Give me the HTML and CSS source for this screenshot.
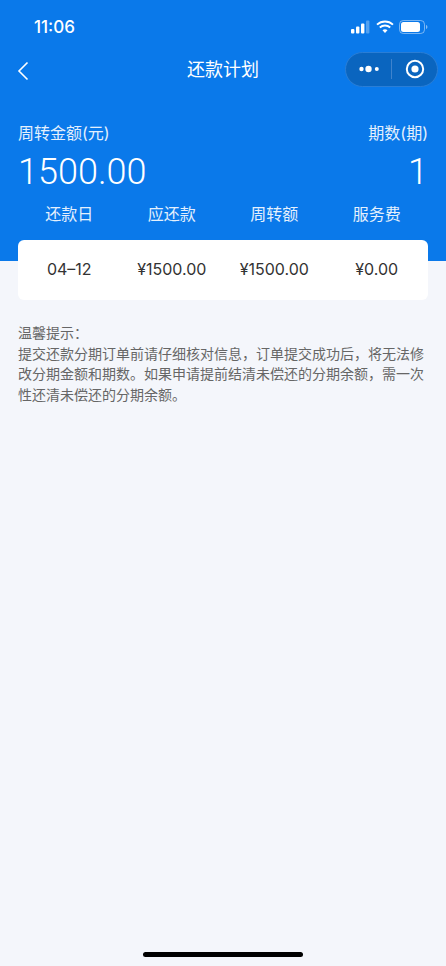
FILE: index.html
```html
<!DOCTYPE html>
<html lang="zh-CN">
<head>
<meta charset="utf-8">
<title>还款计划</title>
<link rel="stylesheet" href="styles.css">
</head>
<body>
<div class="page">
  <header class="hero">
    <div class="status">
      <span class="time">11:06</span>
      <div class="status-icons">
        <svg class="signal" width="20" height="14" viewBox="0 0 20 14"><rect x="0" y="9" width="3.4" height="4.4" rx="1" fill="#fff"/><rect x="5" y="6.5" width="3.4" height="6.9" rx="1" fill="#fff"/><rect x="10" y="3.5" width="3.4" height="9.9" rx="1" fill="#fff"/><rect x="15" y="0.6" width="3.4" height="12.8" rx="1" fill="#fff" opacity=".3"/></svg>
        <svg class="wifi" width="18" height="14" viewBox="0 0 18 14"><path d="M1 4.6C5.6.4 12.4.4 17 4.6" fill="none" stroke="#fff" stroke-width="1.9"/><path d="M3.8 7.5c3-2.7 7.4-2.7 10.4 0" fill="none" stroke="#fff" stroke-width="1.9"/><path d="M6.5 10.2c1.5-1.3 3.5-1.3 5 0L9 13z" fill="#fff"/></svg>
        <svg class="battery" width="29" height="14" viewBox="0 0 29 14"><rect x=".5" y=".5" width="25" height="13" rx="3.8" fill="none" stroke="#fff" stroke-opacity=".45"/><rect x="2" y="2" width="19" height="10" rx="2.5" fill="#fff"/><path d="M27 5v4c.9-.3 1.4-1.1 1.4-2S27.900 5.300 27 5z" fill="#fff" opacity=".5"/></svg>
      </div>
    </div>
    <nav class="nav">
      <svg class="back" width="12" height="20" viewBox="0 0 12 20"><path d="M10.500 1.500 2 10l8.500 8.500" fill="none" stroke="#fff" stroke-width="1.600"/></svg>
      <h1 class="title">还款计划</h1>
      <div class="capsule">
        <div class="cap-cell">
          <svg width="20" height="8" viewBox="0 0 20 8"><circle cx="2.500" cy="4" r="2.200" fill="#fff"/><circle cx="9.500" cy="4" r="3.200" fill="#fff"/><circle cx="17.800" cy="4" r="2" fill="#fff"/></svg>
        </div>
        <span class="cap-line"></span>
        <div class="cap-cell">
          <svg width="20" height="20" viewBox="0 0 20 20"><circle cx="10" cy="10" r="8.200" fill="none" stroke="#fff" stroke-width="2"/><circle cx="10" cy="10" r="3.600" fill="#fff"/></svg>
        </div>
      </div>
    </nav>
    <div class="summary">
      <div class="sum-col">
        <div class="sum-label">周转金额(元)</div>
        <div class="sum-value">1500.00</div>
      </div>
      <div class="sum-col sum-right">
        <div class="sum-label">期数(期)</div>
        <div class="sum-value">1</div>
      </div>
    </div>
    <div class="cols cols-head">
      <span>还款日</span><span>应还款</span><span>周转额</span><span>服务费</span>
    </div>
  </header>
  <main class="main">
    <div class="cols card">
      <span>04–12</span><span>¥1500.00</span><span>¥1500.00</span><span>¥0.00</span>
    </div>
    <section class="note">
      <p>温馨提示：</p>
      <p>提交还款分期订单前请仔细核对信息，订单提交成功后，将无法修改分期金额和期数。如果申请提前结清未偿还的分期余额，需一次性还清未偿还的分期余额。</p>
    </section>
  </main>
  <div class="home-bar"></div>
</div>
</body>
</html>
```

FILE: styles.css
```css
* { box-sizing: border-box; margin: 0; padding: 0; }
html, body { height: 100%; }
body {
  background: #f4f6fb;
  font-family: Inter, "Noto Sans CJK SC", sans-serif;
  overflow: hidden;
}
.page {
  position: relative;
  display: flex;
  flex-direction: column;
  height: 966px;
}
.hero {
  height: 261px;
  background: #0a79ea;
  color: #fff;
}
.status {
  display: flex;
  justify-content: space-between;
  align-items: center;
  height: 44px;
  padding: 10px 18px 0 34px;
}
.time {
  font-size: 17px;
  font-weight: 500;
  line-height: 20px;
}
.status-icons {
  display: flex;
  align-items: center;
  gap: 5px;
}
.nav {
  position: relative;
  display: flex;
  justify-content: space-between;
  align-items: center;
  height: 50px;
  padding: 0 8px 0 17px;
}
.back {
  margin-top: 4px;
}
.title {
  position: absolute;
  left: 0;
  right: 0;
  top: 13px;
  text-align: center;
  font-size: 18px;
  font-weight: 400;
  line-height: 26px;
}
.capsule {
  display: flex;
  align-items: center;
  width: 93px;
  height: 35px;
  background: #0a65bf;
  border: 1px solid #2a7ed6;
  border-radius: 18px;
}
.cap-cell {
  flex: 1;
  display: flex;
  justify-content: center;
  align-items: center;
}
.cap-line {
  width: 1px;
  height: 20px;
  background: #3f83cd;
}
.summary {
  display: flex;
  justify-content: space-between;
  padding: 28px 18px 0;
}
.sum-right { text-align: right; }
.sum-label {
  font-size: 16px;
  line-height: 22px;
  color: #e4f0fd;
}
.sum-value {
  margin-top: 6px;
  font-family: Roboto, sans-serif;
  font-size: 36px;
  font-weight: 300;
  line-height: 44px;
}
.cols {
  display: grid;
  grid-template-columns: repeat(4, 1fr);
  margin: 0 18px;
  text-align: center;
  font-size: 16px;
}
.cols-head {
  margin-top: 9px;
  line-height: 22px;
  color: #e4f0fd;
}
.main {
  flex: 1;
  margin-top: -21px;
}
.card {
  align-items: center;
  height: 60px;
  padding-bottom: 2px;
  background: #fff;
  border-radius: 6px;
  color: #333;
}
.note {
  margin: 23px 18px 0;
  font-size: 14px;
  line-height: 20.700px;
  color: #666;
}
.home-bar {
  position: absolute;
  left: 143px;
  bottom: 9px;
  width: 160px;
  height: 5px;
  border-radius: 3px;
  background: #000;
}
```
